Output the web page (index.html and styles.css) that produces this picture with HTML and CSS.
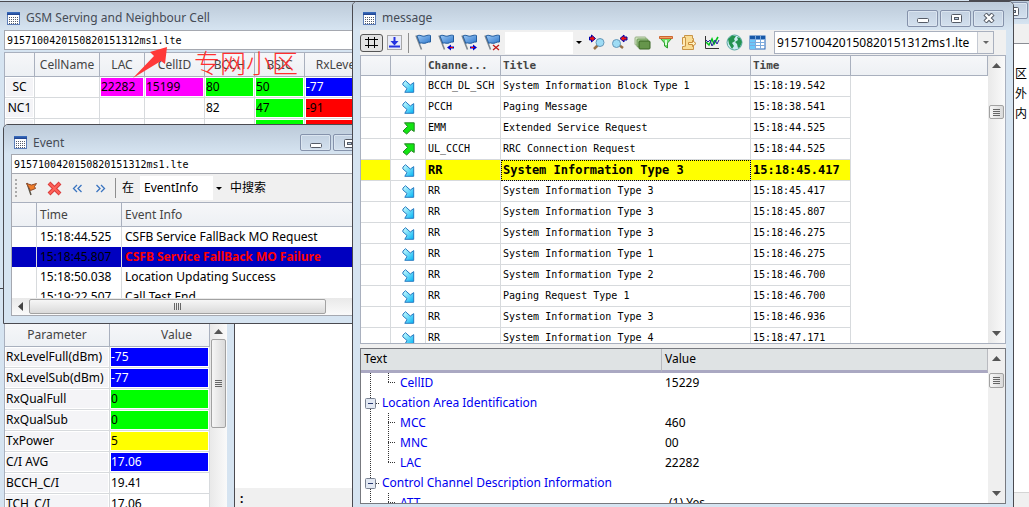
FILE: index.html
```
<!DOCTYPE html>
<html lang="zh-CN">
<head>
<meta charset="utf-8">
<title>GSM Serving and Neighbour Cell</title>
<link rel="stylesheet" href="styles.css">
</head>
<body>
<svg class="defs" aria-hidden="true">
  <defs>
    <linearGradient id="blue" x1="0" y1="0" x2="1" y2="1"><stop offset="0" stop-color="#d5ffff"/><stop offset="1" stop-color="#00b4f4"/></linearGradient>
    <linearGradient id="flagfill" x1="0" y1="0" x2="1" y2="1"><stop offset="0" stop-color="#9cc8f4"/><stop offset="1" stop-color="#2f78cc"/></linearGradient>
    <linearGradient id="deep" x1="0" y1="0" x2="0" y2="1"><stop offset="0" stop-color="#3f73c4"/><stop offset="1" stop-color="#1c3f8c"/></linearGradient>
    <symbol id="grid" viewBox="0 0 13 13"><rect x="0.5" y="0.5" width="12" height="12" fill="#fff" stroke="#5d7eb8"/><rect width="13" height="3" fill="url(#deep)"/><path d="M2 5.5h9M2 7.5h9M2 9.5h9M2 11.5h9" stroke="#555d6c" stroke-dasharray="1 1"/></symbol>
    <symbol id="down" viewBox="0 0 13 13"><path d="M1 3 3.5.7 8.3 5 11.7 2.600V12.300H2.800L5 8.500.800 4.800Z" fill="url(#blue)" stroke="#287bc0"/></symbol>
    <symbol id="up" viewBox="0 0 13 13"><path d="M2.500.8H12.200V9.500L9.200 7.600 4.700 12 1 9 5.500 4.500Z" fill="#12e612" stroke="#238623"/></symbol>
    <symbol id="flag" viewBox="0 0 17 17"><path d="M1 1.500 6.500 15.500" stroke="#7d8790" stroke-width="1.600"/><path d="M2 2C5 0 7 3 10 2S14 1 15.500 1.500L15.500 8C12 7.500 11 10 8 9.200S5 9.500 4.800 9.500Z" fill="url(#flagfill)" stroke="#225c9e"/></symbol>
    <symbol id="uptri" viewBox="0 0 9 5"><path d="M4.500 0 9 5H0Z" fill="#555"/></symbol>
    <symbol id="downtri" viewBox="0 0 9 5"><path d="M0 0H9L4.500 5Z" fill="#555"/></symbol>
    <symbol id="lens" viewBox="0 0 17 17"><path d="m10 11 4 4" stroke="#987045" stroke-width="0"/><path d="m10 11-4 4" stroke="#987045" stroke-width="2.500"/><circle cx="12" cy="8.500" r="4" fill="#9edcf5" stroke="#6697b8"/></symbol>
    <symbol id="min" viewBox="0 0 16 10"><rect x="2.500" y="5.500" width="11" height="4" rx="1" fill="#fff" stroke="#555b66"/></symbol>
    <symbol id="max" viewBox="0 0 16 10"><rect x="3.500" y="1.500" width="10" height="8" rx="1" fill="#fff" stroke="#555b66"/><rect x="6.500" y="4.500" width="4" height="2" fill="#b8cbe0" stroke="#555b66"/></symbol>
    <symbol id="close" viewBox="0 0 16 10"><path d="m4 1 8 8M12 1 4 9" stroke="#555b66" stroke-width="4.400"/><path d="m4.500 1.500 7 7M11.500 1.500l-7 7" stroke="#fff" stroke-width="2.400"/></symbol>
  </defs>
</svg>

<main class="desktop">
  <section class="back" aria-label="background window">
    <div class="back-title"><button class="winbtn" type="button" aria-label="Restore"><svg class="glyph"><use href="#max"/></svg></button></div>
    <div class="back-bar"></div>
    <div class="back-body"><p>区</p><p>外</p><p>内</p></div>
    <div class="back-foot"></div>
  </section>

  <section class="panel">
    <div class="panel-space"></div>
    <div class="panel-foot">:</div>
  </section>

  <section class="window params">
    <div class="params-box">
      <table class="cells">
        <colgroup><col class="c105"><col class="c100"></colgroup>
        <thead><tr><th>Parameter</th><th class="valhead">Value</th></tr></thead>
        <tbody>
          <tr><th>RxLevelFull(dBm)</th><td class="navy">-75</td></tr>
          <tr><th>RxLevelSub(dBm)</th><td class="navy">-77</td></tr>
          <tr><th>RxQualFull</th><td class="lime">0</td></tr>
          <tr><th>RxQualSub</th><td class="lime">0</td></tr>
          <tr><th>TxPower</th><td class="yellow">5</td></tr>
          <tr><th>C/I AVG</th><td class="navy">17.06</td></tr>
          <tr><th>BCCH_C/I</th><td>19.41</td></tr>
          <tr><th>TCH_C/I</th><td>17.06</td></tr>
        </tbody>
      </table>
      <div class="vscroll"><svg class="tri"><use href="#uptri"/></svg><div class="thumb tall"><i class="grip"></i></div></div>
    </div>
  </section>

  <section class="window gsm">
    <header class="title"><svg class="app"><use href="#grid"/></svg><h1>GSM Serving and Neighbour Cell</h1></header>
    <input class="file" type="text" aria-label="Serving cell file" value="9157100420150820151312ms1.lte">
    <table class="cells serving">
      <colgroup><col class="c30"><col class="c65"><col class="c45"><col class="c60"><col class="c50"><col class="c50"><col class="c65"></colgroup>
      <thead><tr><th></th><th>CellName</th><th>LAC</th><th>CellID</th><th>BCCH</th><th>BSIC</th><th>RxLevel</th></tr></thead>
      <tbody>
        <tr><th class="mid">SC</th><td></td><td class="magenta">22282</td><td class="magenta">15199</td><td class="lime">80</td><td class="lime">50</td><td class="navy">-77</td></tr>
        <tr><th class="mid">NC1</th><td></td><td></td><td></td><td>82</td><td class="lime">47</td><td class="red">-91</td></tr>
        <tr><th class="mid"></th><td></td><td></td><td></td><td></td><td class="lime"></td><td class="red"></td></tr>
      </tbody>
    </table>
  </section>

  <svg class="pointer" viewBox="0 0 36 34" aria-hidden="true"><path d="M34 0 17 5 21 9 0 31 28 14 32 17Z" fill="#ff3939"/></svg>
  <p class="note">专网小区</p>

  <section class="window event">
    <header class="title"><svg class="app"><use href="#grid"/></svg><h2>Event</h2>
      <span class="winbtns"><button class="winbtn" type="button" aria-label="Minimize"><svg class="glyph"><use href="#min"/></svg></button><button class="winbtn" type="button" aria-label="Restore"><svg class="glyph"><use href="#max"/></svg></button></span>
    </header>
    <div class="event-box">
      <input class="file" type="text" aria-label="Event file" value="9157100420150820151312ms1.lte">
      <div class="bar">
        <i class="handle"></i>
        <button class="tool" type="button" aria-label="Flag"><svg viewBox="0 0 17 17"><path d="m4 3 4 12" stroke="#5b5346" stroke-width="1.500"/><path d="m3.500 3.500 5 1.500 5-1.500-2 3 1 2-5 2Z" fill="#f07d2a" stroke="#8c4a2a"/></svg></button>
        <button class="tool" type="button" aria-label="Delete"><svg viewBox="0 0 17 17"><path d="m3 3 11 11M14 3 3 14" stroke="#d93b3b" stroke-width="4"/><path d="m3.500 3.500 10 10M13.500 3.500l-10 10" stroke="#ff6258" stroke-width="2"/></svg></button>
        <button class="tool" type="button" aria-label="Previous"><svg viewBox="0 0 17 17"><path d="m8 5-3.500 3.500L8 12m4.500-7L9 8.500l3.500 3.500" fill="none" stroke="#3a74c0" stroke-width="1.300"/></svg></button>
        <button class="tool" type="button" aria-label="Next"><svg viewBox="0 0 17 17"><path d="M4.500 5 8 8.500 4.500 12M9 5l3.500 3.500L9 12" fill="none" stroke="#3a74c0" stroke-width="1.300"/></svg></button>
        <i class="sep"></i>
        <label for="field">在</label>
        <span class="combo info"><select id="field"><option>EventInfo</option></select><i class="drop"></i></span>
        <span>中搜索</span>
      </div>
      <div class="event-list">
        <table class="events">
          <colgroup><col class="c25"><col class="c85"><col></colgroup>
          <thead><tr><th></th><th>Time</th><th>Event Info</th></tr></thead>
          <tbody>
            <tr><td></td><td>15:18:44.525</td><td>CSFB Service FallBack MO Request</td></tr>
            <tr class="chosen"><td></td><td>15:18:45.807</td><td class="alert">CSFB Service FallBack MO Failure</td></tr>
            <tr><td></td><td>15:18:50.038</td><td>Location Updating Success</td></tr>
            <tr><td></td><td>15:19:22.507</td><td>Call Test End</td></tr>
          </tbody>
        </table>
      </div>
      <div class="hscroll"><svg class="lefttri" viewBox="0 0 5 9"><path d="M5 0V9L0 4.500Z" fill="#444"/></svg><div class="hthumb"><i class="hgrip"></i></div></div>
    </div>
  </section>

  <section class="window message">
    <header class="title"><svg class="app"><use href="#grid"/></svg><h2>message</h2>
      <span class="winbtns"><button class="winbtn" type="button" aria-label="Minimize"><svg class="glyph"><use href="#min"/></svg></button><button class="winbtn" type="button" aria-label="Restore"><svg class="glyph"><use href="#max"/></svg></button><button class="winbtn" type="button" aria-label="Close"><svg class="glyph"><use href="#close"/></svg></button></span>
    </header>
    <div class="msgbar">
      <button class="hash" type="button" aria-label="Grid"><svg viewBox="0 0 13 13"><path d="M0 3.500h13M0 9.500h13M3.500 1v11M9.500 1v11" stroke="#000"/></svg></button>
      <button class="tool dl" type="button" aria-label="Scroll to end"><svg viewBox="0 0 17 17"><rect x="1.500" y="1.500" width="14" height="14" fill="#e8ebf8" stroke="#a8a8a8"/><path d="M8.500 3v6M3 12.500h11" fill="none" stroke="#2432e0" stroke-width="2"/><path d="M4.500 7h8l-4 4.500Z" fill="#2432e0"/></svg></button>
      <i class="sep"></i>
      <div class="tools flags">
        <button class="tool" type="button" aria-label="Flag"><svg viewBox="0 0 17 17"><use href="#flag"/></svg></button>
        <button class="tool" type="button" aria-label="Previous flag"><svg viewBox="0 0 17 17"><use href="#flag"/><path d="m9 13.500 4-3v2h3v2h-3v2Z" fill="#0000c8"/><path d="M12 13h3v1h-3Z" fill="#e00"/></svg></button>
        <button class="tool" type="button" aria-label="Next flag"><svg viewBox="0 0 17 17"><use href="#flag"/><path d="m16 13.500-4-3v2H9v2h3v2Z" fill="#0000c8"/><path d="M10 13h3v1h-3Z" fill="#e00"/></svg></button>
        <button class="tool" type="button" aria-label="Remove flag"><svg viewBox="0 0 17 17"><use href="#flag"/><path d="m9 11 6 5M15 11l-6 5" stroke="#c01818" stroke-width="1.300"/></svg></button>
      </div>
      <span class="combo find"><select aria-label="Find text"><option></option></select><i class="drop"></i></span>
      <div class="tools">
        <button class="tool" type="button" aria-label="Find next"><svg viewBox="0 0 17 17"><use href="#lens"/><path d="M1.500 3h2V1l4 3.500-4 3.500V6h-2Z" fill="#e11" stroke="#00a"/></svg></button>
        <button class="tool" type="button" aria-label="Find previous"><svg viewBox="0 0 17 17"><path d="m8 11 4 3" stroke="#987045" stroke-width="2.500"/><circle cx="5.500" cy="9.500" r="4" fill="#9edcf5" stroke="#6697b8"/><path d="M16 3h-3V1L9 4.500 13 8V6h3Z" fill="#e11" stroke="#00a"/></svg></button>
        <button class="tool" type="button" aria-label="Layers"><svg viewBox="0 0 17 17"><rect x="1" y="3" width="11" height="8" rx="1" fill="#d0e2bf" stroke="#9ab389"/><rect x="3" y="5" width="11" height="8" rx="1" fill="#9bc486" stroke="#719a5b"/><rect x="5" y="7" width="11" height="8" rx="1" fill="#66954b" stroke="#386522"/></svg></button>
        <button class="tool" type="button" aria-label="Filter"><svg viewBox="0 0 17 17"><path d="M3 4h12l-4.500 5v5l-3-2V9Z" fill="#6be06b" stroke="#2f9d2f"/><path d="M2.500 2.500h13v2h-13Z" fill="#f0a060" stroke="#cc6530"/><path d="M8 6h2v5H8Z" fill="#d8ffd8"/></svg></button>
        <button class="tool" type="button" aria-label="Export"><svg viewBox="0 0 17 17"><path d="M4.500 1.500h8v3h1v11h-11v-3h2Z" fill="#f9dc94" stroke="#c99445"/><path d="M2.500 10.500v-7h3v9" fill="#ffe9b2" stroke="#c99445"/><path d="M8.500 8.500h4v-2l3.500 3-3.500 3v-2h-4Z" fill="#fff3c4" stroke="#c98d3c"/></svg></button>
        <button class="tool" type="button" aria-label="Chart"><svg viewBox="0 0 17 17"><path d="M2.500 2v12.500H16" fill="none" stroke="#333"/><path d="m3 8 3 3 3-6 2 5 4-7" fill="none" stroke="#00c41a" stroke-width="1.600"/><path d="m3 6 2 2 2-2 2 6 3-6 2 4 2-4" fill="none" stroke="#2424a0"/></svg></button>
        <button class="tool" type="button" aria-label="Map"><svg viewBox="0 0 17 17"><circle cx="8.500" cy="8.500" r="7.500" fill="#ccebf1" stroke="#58a7a3"/><path d="M2 5 6 1.500l4 .5-2 3 1 2-3 2 2 3-2 3L3 10Z" fill="#249350"/><path d="m11 3 3 1 2 4-2 5-2 1-1-4-2-2 3-2Z" fill="#249350"/></svg></button>
        <button class="tool" type="button" aria-label="Columns"><svg viewBox="0 0 17 17"><rect x="1" y="2" width="15" height="13" fill="#fff" stroke="#2264b8"/><path d="M1 2h15v3H1Z" fill="#1758a8"/><path d="M1 5h5v10H1Z" fill="#6cc8fa"/><path d="M6.500 2v13M11.500 2v13M1 5.500h15M1 8.500h15M1 11.500h15" stroke="#7ba9dd"/></svg></button>
      </div>
      <span class="combo filebox"><select aria-label="Message file"><option>9157100420150820151312ms1.lte</option></select><i class="drop"></i></span>
    </div>

    <div class="log">
      <table class="msgs">
        <colgroup><col class="c30"><col class="c35"><col class="c75"><col class="c250"><col class="c100"><col></colgroup>
        <thead><tr><th></th><th></th><th>Channe...</th><th>Title</th><th>Time</th><th></th></tr></thead>
        <tbody>
          <tr><td></td><td><svg class="dir"><use href="#down"/></svg></td><td>BCCH_DL_SCH</td><td>System Information Block Type 1</td><td>15:18:19.542</td></tr>
          <tr><td></td><td><svg class="dir"><use href="#down"/></svg></td><td>PCCH</td><td>Paging Message</td><td>15:18:38.541</td></tr>
          <tr><td></td><td><svg class="dir"><use href="#up"/></svg></td><td>EMM</td><td>Extended Service Request</td><td>15:18:44.525</td></tr>
          <tr><td></td><td><svg class="dir"><use href="#up"/></svg></td><td>UL_CCCH</td><td>RRC Connection Request</td><td>15:18:44.525</td></tr>
          <tr class="marked"><td></td><td class="plain"><svg class="dir"><use href="#down"/></svg></td><td>RR</td><td class="focus">System Information Type 3</td><td>15:18:45.417</td></tr>
          <tr><td></td><td><svg class="dir"><use href="#down"/></svg></td><td>RR</td><td>System Information Type 3</td><td>15:18:45.417</td></tr>
          <tr><td></td><td><svg class="dir"><use href="#down"/></svg></td><td>RR</td><td>System Information Type 3</td><td>15:18:45.807</td></tr>
          <tr><td></td><td><svg class="dir"><use href="#down"/></svg></td><td>RR</td><td>System Information Type 3</td><td>15:18:46.275</td></tr>
          <tr><td></td><td><svg class="dir"><use href="#down"/></svg></td><td>RR</td><td>System Information Type 1</td><td>15:18:46.275</td></tr>
          <tr><td></td><td><svg class="dir"><use href="#down"/></svg></td><td>RR</td><td>System Information Type 2</td><td>15:18:46.700</td></tr>
          <tr><td></td><td><svg class="dir"><use href="#down"/></svg></td><td>RR</td><td>Paging Request Type 1</td><td>15:18:46.700</td></tr>
          <tr><td></td><td><svg class="dir"><use href="#down"/></svg></td><td>RR</td><td>System Information Type 3</td><td>15:18:46.936</td></tr>
          <tr><td></td><td><svg class="dir"><use href="#down"/></svg></td><td>RR</td><td>System Information Type 4</td><td>15:18:47.171</td></tr>
        </tbody>
      </table>
      <div class="vscroll ends"><svg class="tri"><use href="#uptri"/></svg><div class="thumb low"><i class="grip"></i></div><svg class="tri last"><use href="#downtri"/></svg></div>
    </div>

    <div class="detail">
      <table class="tree">
        <colgroup><col class="c301"><col></colgroup>
        <thead><tr><th>Text</th><th>Value</th></tr></thead>
        <tbody>
          <tr><td><span class="node"><svg class="kid" viewBox="0 0 37 20"><path d="M9.500 0v20M27.500 0v10M27 9.500h8"/></svg>CellID</span></td><td>15229</td></tr>
          <tr><td><span class="node"><svg class="root" viewBox="0 0 19 20"><path d="M9.500 0v20M15 10.500h4"/><rect x="4.500" y="5.500" width="10" height="10" rx="1"/><path class="minus" d="M7 10.500h5"/></svg>Location Area Identification</span></td><td></td></tr>
          <tr><td><span class="node"><svg class="kid" viewBox="0 0 37 20"><path d="M9.500 0v20M27.500 0v20M27 9.500h8"/></svg>MCC</span></td><td>460</td></tr>
          <tr><td><span class="node"><svg class="kid" viewBox="0 0 37 20"><path d="M9.500 0v20M27.500 0v20M27 9.500h8"/></svg>MNC</span></td><td>00</td></tr>
          <tr><td><span class="node"><svg class="kid" viewBox="0 0 37 20"><path d="M9.500 0v20M27.500 0v10M27 9.500h8"/></svg>LAC</span></td><td>22282</td></tr>
          <tr><td><span class="node"><svg class="root" viewBox="0 0 19 20"><path d="M9.500 0v20M15 10.500h4"/><rect x="4.500" y="5.500" width="10" height="10" rx="1"/><path class="minus" d="M7 10.500h5"/></svg>Control Channel Description Information</span></td><td></td></tr>
          <tr><td><span class="node"><svg class="kid" viewBox="0 0 37 20"><path d="M9.500 0v20M27.500 0v10M27 9.500h8"/></svg>ATT</span></td><td class="inset">(1) Yes</td></tr>
        </tbody>
      </table>
      <div class="vscroll ends classic"><svg class="tri"><use href="#uptri"/></svg><div class="thumb short"><i class="grip"></i></div><svg class="tri last"><use href="#downtri"/></svg></div>
    </div>
  </section>
</main>
</body>
</html>
```

FILE: styles.css
```
* { box-sizing: border-box; }

body {
  margin: 0;
  background: #d6e4f1;
  color: #000;
  font: 12px/16px "Noto Sans", "Noto Sans CJK SC", sans-serif;
}

h1, h2, p { margin: 0; font-size: inherit; font-weight: normal; }
button, input, select { margin: 0; padding: 0; border: 0; border-radius: 0; font: inherit; color: inherit; background: none; }
select { appearance: none; }
svg { display: block; }
i { display: block; flex: none; }
.defs { position: absolute; width: 0; height: 0; }

.desktop { position: relative; height: 100vh; overflow: hidden; }

/* Windows on the desktop */
.window {
  position: absolute;
  display: flex;
  flex-direction: column;
  background: #d6e4f1;
  border: 1px solid #4a4a50;
}
.title {
  display: flex;
  flex: none;
  align-items: center;
  gap: 6px;
  height: 28px;
  padding-top: 4px;
  background: linear-gradient(#bccad9, #d6e4f1);
  color: #454b55;
  font-size: 12px;
  white-space: nowrap;
}
.app { flex: none; width: 13px; height: 13px; }
.winbtns { display: flex; gap: 2px; margin-left: auto; }
.winbtn {
  display: grid;
  flex: none;
  place-items: center;
  width: 31px;
  height: 17px;
  border: 1px solid #8592ab;
  border-radius: 2px;
  background: linear-gradient(#c3d1e1, #d3e0ee);
  box-shadow: inset 0 0 0 1px #dbe5f0;
}
.glyph { width: 16px; height: 10px; }

.gsm { left: -1px; top: 1px; width: 420px; height: 288px; border-left: 0; padding-left: 5px; }
.gsm .title { padding-left: 3px; margin-left: -5px; padding-left: 8px; }
.event { left: 3px; top: 124px; width: 392px; height: 200px; border-radius: 5px 0 0 0; overflow: hidden; }
.event .title { height: 29px; padding: 6px 30px 0 10px; }
.params { left: -1px; top: 288px; width: 236px; bottom: -8px; padding: 8px 7px 0 4px; }
.message { left: 352px; top: 1px; right: 15px; bottom: -8px; padding: 0 7px 10px; border-radius: 5px 5px 0 0; }
.message .title { margin: 0 -7px; padding: 4px 9px 0 10px; border-radius: 4px 4px 0 0; }

/* Window behind the right edge */
.back { position: absolute; top: 0; right: 0; bottom: 0; width: 60px; display: flex; flex-direction: column; background: #fff; }
.back-title { height: 24px; padding: 1px 1px 0 0; background: linear-gradient(#bccad9, #d6e4f1); border-top: 1px solid #4a4a50; }
.back-title .winbtn { margin-left: auto; }
.back-bar { height: 20px; background: #f0f0f0; border-bottom: 1px solid #8b8d94; }
.back-body { flex: 1; padding: 20px 2px; line-height: 20px; text-align: right; }
.back-foot { height: 15px; background: #f0f0f0; border-top: 1px solid #d5d5d5; }

.panel { position: absolute; left: 235px; top: 300px; bottom: 0; width: 160px; display: flex; flex-direction: column; background: #fff; }
.panel-space { flex: 1; }
.panel-foot { height: 19px; padding: 3px 5px; background: #f0f0f0; font-weight: bold; line-height: 16px; }

/* Shared controls */
.file {
  flex: none;
  width: 100%;
  height: 20px;
  padding: 0 2px;
  border: 1px solid #a5a8b0;
  background: #fff;
  font: 10px/18px "DejaVu Sans Mono", monospace;
}
.combo { display: flex; background: #fff; }
.combo select { flex: 1; min-width: 0; }
.drop { display: grid; place-items: center; width: 11px; background: #f0f0f0; }
.drop::after { content: ""; border: 3px solid transparent; border-top-color: #000; border-bottom: 0; }
.tool { display: grid; flex: none; place-items: center; width: 17px; height: 17px; }
.tool svg { width: 17px; height: 17px; }
.sep { width: 1px; height: 20px; background: #8e8e8e; }

/* Tables */
table { border-collapse: separate; border-spacing: 0; table-layout: fixed; }
th, td { padding: 0; font-weight: normal; text-align: left; white-space: nowrap; overflow: hidden; }
.c25 { width: 25px; } .c30 { width: 30px; } .c35 { width: 35px; } .c45 { width: 45px; }
.c50 { width: 50px; } .c60 { width: 60px; } .c65 { width: 65px; } .c75 { width: 75px; }
.c85 { width: 85px; } .c100 { width: 100px; } .c105 { width: 105px; } .c250 { width: 250px; } .c301 { width: 301px; }

thead th {
  background: linear-gradient(#f6f7f9, #edf0f4);
  border-right: 1px solid #a9b0be;
  border-bottom: 1px solid #a9b0be;
  color: #444;
}
.cells { flex: none; width: 0; background: #fff; }
.cells thead th { height: 24px; text-align: center; }
.cells thead .valhead { padding-left: 34px; }
.cells td, .cells tbody th {
  height: 21px;
  padding: 0 1px;
  border-right: 1px solid #d7dadd;
  border-bottom: 1px solid #d7dadd;
  box-shadow: inset 0 0 0 1px #fff;
}
.cells tbody th { background: #f4f4f7; }
.cells tbody .mid { text-align: center; }
.serving { margin-top: 2px; border-top: 1px solid #a9b0be; border-left: 1px solid #a9b0be; }
.cells .navy { background: #00f; color: #fff; }
.cells .lime { background: #0f0; }
.cells .red { background: #f00; }
.cells .yellow { background: #ff0; }
.cells .magenta { background: #f0f; }

.params-box { display: flex; flex: 1; min-height: 0; overflow: hidden; background: #fff; border-left: 1px solid #a9b0be; padding-top: 26px; }
.params .vscroll { padding-top: 6px; }

/* Scroll bars */
.vscroll { display: flex; flex: none; flex-direction: column; align-items: center; width: 17px; background: linear-gradient(90deg, #e9e9e9, #fafafa); }
.tri { flex: none; width: 9px; height: 5px; }
.last { margin-top: auto; }
.ends { padding: 7px 0; }
.thumb { display: grid; place-items: center; width: 15px; margin-top: 5px; border: 1px solid #a2a2a2; border-radius: 2px; background: linear-gradient(90deg, #f6f6f6, #dadada); }
.tall { height: 89px; margin-top: 5px; }
.low { height: 14px; margin-top: 37px; }
.short { height: 15px; margin-top: 12px; }
.grip { width: 7px; height: 7px; background: repeating-linear-gradient(#666 0 1px, transparent 1px 2px); }
.classic { background: #efefef; }

/* Event window */
.event-box { flex: none; margin-left: 7px; border-left: 1px solid #a5a8b0; border-bottom: 1px solid #a5a8b0; background: #fff; }
.event-box .file { display: block; border-left: 0; }
.bar { display: flex; align-items: center; gap: 6px; height: 28px; padding: 0 3px; background: #f0f0f0; font-size: 12px; }
.bar .handle { width: 2px; height: 18px; background: repeating-linear-gradient(#aaa 0 2px, transparent 2px 4px); }
.info { width: 84px; height: 24px; }
.info select { padding-left: 4px; }
.event-list { height: 96px; overflow: hidden; }
.events { width: 100%; border-top: 1px solid #a9b0be; }
.events thead th { height: 24px; padding-left: 3px; }
.events td { height: 20px; padding-left: 3px; border-right: 1px solid #d7dadd; }
.chosen { background: #0000c0; }
.events .chosen td { border-right-color: #ddd; }
.events .alert { color: #f00; font-weight: bold; }
.hscroll { display: flex; align-items: center; gap: 6px; height: 17px; padding-left: 6px; background: linear-gradient(#e9e9e9, #fafafa); }
.lefttri { width: 5px; height: 9px; }
.hthumb { display: grid; place-items: center; width: 297px; height: 15px; border: 1px solid #a2a2a2; border-radius: 2px; background: linear-gradient(#f6f6f6, #dadada); }
.hgrip { width: 8px; height: 7px; background: repeating-linear-gradient(90deg, #666 0 1px, transparent 1px 2px); }

/* Message window */
.msgbar { display: flex; flex: none; align-items: center; height: 25px; padding-right: 12px; background: #f0f0f0; }
.hash { display: grid; flex: none; place-items: center; width: 23px; height: 18px; border: 1px solid #555; border-radius: 3px; background: #e2e2e2; }
.hash svg { width: 13px; height: 13px; }
.dl { margin: 0 5px 0 3px; }
.tools { display: flex; flex: none; gap: 6px; }
.flags { margin: 0 4px 0 6px; }
.find { flex: none; width: 79px; height: 22px; margin-right: 4px; }
.filebox { flex: 1; height: 23px; margin-left: 8px; border: 1px solid #a9b0be; }
.filebox select { padding-left: 2px; }
.filebox .drop { width: 16px; border-left: 1px solid #c5cad3; }
.filebox .drop::after { border-top-color: #666; }

.log { display: flex; flex: none; height: 289px; overflow: hidden; border: 1px solid #a9b0be; background: #fff; align-items: stretch; }
.msgs { flex: 1; width: 0; height: 0; font: 10px/14px "DejaVu Sans Mono", monospace; }
.msgs thead th { height: 20px; padding-left: 2px; font-weight: bold; font-size: 11px; }
.msgs td { height: 21px; padding-left: 2px; border-right: 1px solid #d7dadd; border-bottom: 1px solid #d7dadd; }
.msgs thead th:nth-child(6) { padding: 0; }
.dir { width: 13px; height: 13px; margin-left: 9px; }
.marked td { background: #ff0; font-size: 12px; font-weight: bold; }
.marked .plain { background: #fff; }
.marked .focus { outline: 1px dotted #000; outline-offset: -1px; }

.detail { display: flex; flex: 1; min-height: 0; margin-top: 4px; overflow: hidden; border: 1px solid #77797f; background: #fff; box-shadow: 0 -4px #f0f0f0; }
.tree { flex: 1; width: 0; height: 0; }
.tree thead th { height: 24px; padding: 0 3px 1px; background: #dfe3e4; border-right: 1px solid #b8babf; border-bottom: 3px solid #aaa8c2; color: #000; }
.tree td { height: 20px; padding-left: 3px; }
.tree td:first-child { padding: 0; color: #0000f0; }
.tree .inset { padding-left: 7px; }
.node { display: flex; align-items: center; gap: 2px; }
.node svg { flex: none; height: 20px; fill: none; stroke: #333; stroke-dasharray: 1 1; }
.kid { width: 37px; }
.root { width: 19px; }
.node rect { fill: #e3e9f3; stroke: #7b8494; stroke-dasharray: none; }
.node .minus { stroke: #2b3b70; stroke-dasharray: none; }

/* Hand-drawn remark */
.pointer { position: absolute; left: 133px; top: 47px; width: 36px; height: 34px; }
.note { position: absolute; left: 194px; top: 46px; color: #ff3030; font: 300 26px/32px "Noto Sans CJK SC", sans-serif; }
```
